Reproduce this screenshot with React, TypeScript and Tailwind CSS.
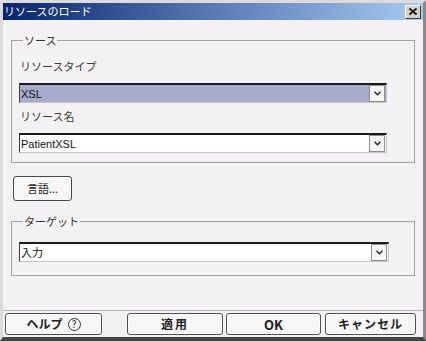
import React from "react";

const jp = "font-['Noto_Sans_CJK_JP','Liberation_Sans',sans-serif]";
const latin = "font-['Liberation_Sans','Noto_Sans_CJK_JP',sans-serif]";

type ComboProps = {
  value: string;
  selected?: boolean;
  wide?: boolean;
};

// combo box with the little chevron button on the right
const Combo = ({ value, selected, wide }: ComboProps) => (
  <div
    className={`flex h-[20px] items-center border-t-2 border-l border-b border-r border-t-[#1c1c1c] border-l-[#3c3c3c] border-b-[#c4c4c4] border-r-[#c4c4c4] ${
      wide ? "w-[370px]" : "w-[368px]"
    } ${selected ? "bg-[#a7abcd]" : "bg-white"}`}
  >
    <span className={`flex-1 pl-[1px] text-[11px] leading-[14px] text-[#111] ${latin}`}>{value}</span>
    <span className="mr-[1px] flex h-[17px] w-[16px] items-center justify-center border border-[#8e8e8e] bg-[#f3f3f3]">
      <svg width="7" height="5" viewBox="0 0 7 5">
        <path d="M0.5 0.8 L3.5 3.8 L6.5 0.8" stroke="#222" strokeWidth="1.3" fill="none" />
      </svg>
    </span>
  </div>
);

const Label = ({ children, className = "" }: { children: React.ReactNode; className?: string }) => (
  <div className={`pl-[1px] text-[11px] leading-[14px] text-[#3a3a3a] ${jp} ${className}`}>{children}</div>
);

const FootButton = ({ children, className = "" }: { children: React.ReactNode; className?: string }) => (
  <button
    className={`flex h-[22px] items-center justify-center rounded-[3px] border border-[#505050] bg-[#f7f6f7] text-[12px] font-bold leading-none text-[#222] shadow-[inset_0_0_0_1px_#ffffff] ${jp} ${className}`}
  >
    {children}
  </button>
);

export default function App() {
  return (
    <div className="flex h-[341px] w-[426px] flex-col border-t-[3px] border-l-[3px] border-r-[3px] border-b-[4px] border-t-[#dcdadc] border-l-[#dcdadc] border-r-[#8a8a8a] border-b-[#454545] bg-[#f3f1f4]">
      {/* title bar */}
      <div className="flex h-[17px] items-center justify-between bg-linear-to-r from-[#0a246a] via-[#5a7ab4] to-[#a6cbf1] pl-[1px] pr-[2px]">
        <span className={`text-[11px] leading-none text-white ${jp}`}>リソースのロード</span>
        <span className="flex h-[14px] w-[16px] items-center justify-center border border-t-white border-l-white border-b-[#404040] border-r-[#404040] bg-[#d4d0c8]">
          <svg width="8" height="7" viewBox="0 0 8 7">
            <path d="M0.5 0.5 L7.5 6.5 M7.5 0.5 L0.5 6.5" stroke="#000" strokeWidth="1.6" />
          </svg>
        </span>
      </div>

      {/* body */}
      <div className="flex flex-1 flex-col pl-[8px] pt-[13px]">
        <fieldset className="w-[404px] border border-[#a2a2a2] pl-[7px] pb-[9px]">
          <legend className={`ml-[4px] px-[1px] text-[11px] leading-[14px] text-[#333] ${jp}`}>ソース</legend>
          <Label className="mt-[12px]">リソースタイプ</Label>
          <div className="mt-[10px]">
            <Combo value="XSL" selected />
          </div>
          <Label className="mt-[6px]">リソース名</Label>
          <div className="mt-[10px]">
            <Combo value="PatientXSL" />
          </div>
        </fieldset>

        <button
          className={`ml-[2px] mt-[13px] flex h-[25px] w-[59px] items-center justify-center rounded-[3px] border border-[#4a4a4a] bg-[#f7f6f7] text-[11px] text-[#222] ${jp}`}
        >
          言語...
        </button>

        <fieldset className="mt-[13px] w-[404px] border border-[#a2a2a2] pl-[7px] pb-[13px]">
          <legend className={`ml-[4px] px-[1px] text-[11px] leading-[14px] text-[#333] ${jp}`}>ターゲット</legend>
          <div className="mt-[14px]">
            <Combo value="入力" wide />
          </div>
        </fieldset>
      </div>

      {/* footer buttons */}
      <div className="flex h-[27px] items-start border-t border-t-[#b4b2b4] pt-[2px]">
        <FootButton className="ml-[2px] w-[97px] gap-[5px]">
          <span>ヘルプ</span>
          <span className="flex h-[13px] w-[13px] items-center justify-center rounded-full border border-[#333] text-[10px] font-normal leading-none">
            ?
          </span>
        </FootButton>
        <FootButton className="ml-[25px] w-[96px] tracking-[2px]">適用</FootButton>
        <FootButton className={`ml-[3px] w-[95px] ${latin} text-[13px]`}>OK</FootButton>
        <FootButton className="ml-[4px] w-[91px] tracking-[1px]">キャンセル</FootButton>
      </div>
    </div>
  );
}
